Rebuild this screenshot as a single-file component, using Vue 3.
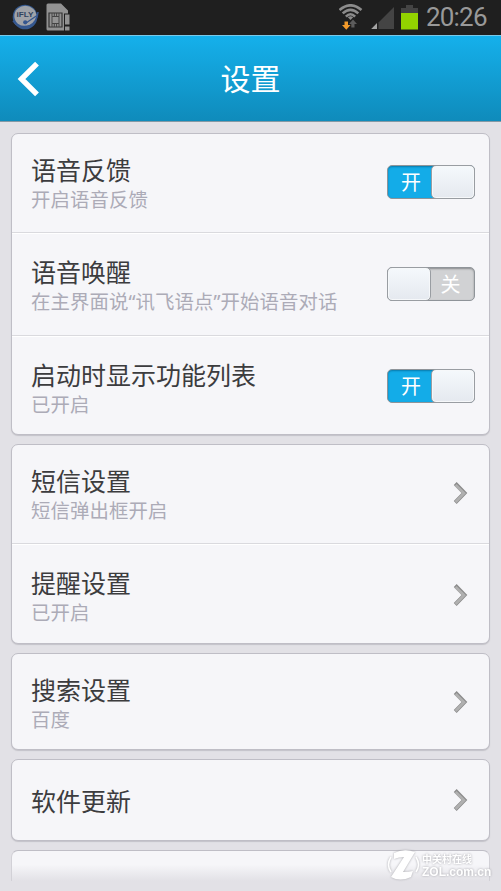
<script setup>
const groups = [
  [
    { title: '语音反馈', sub: '开启语音反馈', kind: 'switch', on: true, size: 'first' },
    { title: '语音唤醒', sub: '在主界面说“讯飞语点”开始语音对话', kind: 'switch', on: false, size: 'middle' },
    { title: '启动时显示功能列表', sub: '已开启', kind: 'switch', on: true, size: 'last' },
  ],
  [
    { title: '短信设置', sub: '短信弹出框开启', kind: 'link', size: 'first' },
    { title: '提醒设置', sub: '已开启', kind: 'link', size: 'last' },
  ],
  [{ title: '搜索设置', sub: '百度', kind: 'link', size: 'single' }],
  [{ title: '软件更新', kind: 'link', size: 'short' }],
]
</script>

<template>
  <div class="screen">
    <div class="status">
      <svg class="ifly" width="28" height="26" viewBox="0 0 28 26">
        <circle cx="13" cy="13" r="12.3" fill="#35598f" />
        <ellipse cx="13.3" cy="12.1" rx="11" ry="10.4" fill="#a0a3a8" />
        <path d="M2 19Q10 26 20 20Q24 17 26 9Q22 15 15 17Q19 18 18 20Q9 23 2 19Z" fill="#a0a3a8" />
        <path d="M1 17Q8 25 18 21.500Q25 18 26 8" fill="none" stroke="#34568f" stroke-width="1.600" />
        <path d="M14 19L25 11.500" stroke="#34568f" stroke-width="1.200" />
        <circle cx="13.2" cy="18.300" r="2.100" fill="#34568f" />
        <text x="4.600" y="13.400" font-size="7.600" font-weight="700" textLength="17" lengthAdjust="spacingAndGlyphs" fill="#30435f">iFLY</text>
      </svg>
      <svg class="sim" width="26" height="28" viewBox="0 0 26 28">
        <path d="M2 0.500H15L22 7.500V10.500H18V27.500H2Q0.500 27.500 0.500 26V2Q0.500 0.500 2 0.500Z" fill="#929292" />
        <path d="M3 10H16V24H3Z" fill="#929292" stroke="#333" stroke-width="1.200" />
        <path d="M6 13.500H13V20.500H6ZM6 10V13.500M8.300 10V13.500M10.600 10V13.500M13 10V13.500M6 20.500V24M8.300 20.500V24M10.600 20.500V24M13 20.500V24" fill="none" stroke="#444" stroke-width="1" />
        <path d="M19 11.500H23.500V21.500H19ZM19 23.500H23.500V27.500H19Z" fill="#929292" />
      </svg>
      <span class="grow"></span>
      <svg class="wifi" width="24" height="26" viewBox="0 0 24 26">
        <g fill="none" stroke="#8b8b8b" stroke-width="2.600">
          <path d="M0.500 6Q11.500-3.400 22.500 6" />
          <path d="M3.700 9.400Q11.500 2.200 19.300 9.400" />
          <path d="M6.900 12.600Q11.500 7.800 16.100 12.600" />
        </g>
        <path d="M8.800 13.300Q11.500 11 14.200 13.300L11.500 16Z" fill="#8b8b8b" />
        <path d="M5.500 17.500H9V21H11.500L7.300 25.800L3 21H5.500Z" fill="#f49b2b" />
        <path d="M12.300 23.500V20H10L14 15.500L18 20H15.500V23.500Z" fill="#5c5c5c" />
      </svg>
      <svg class="signal" width="24" height="24" viewBox="0 0 24 24">
        <path d="M23 1V23H7.500V16.500Z" fill="#444" />
        <path d="M6 17V23H0.200Z" fill="#a5a5a5" />
      </svg>
      <svg class="battery" width="17" height="25" viewBox="0 0 17 25">
        <path d="M5 0H12V3H17V9H0V3H5Z" fill="#444" />
        <path d="M0 8H17V24.500H0Z" fill="#93d300" />
      </svg>
      <span class="clock">20:26</span>
    </div>

    <header class="header">
      <svg class="back" width="24" height="38" viewBox="0 0 24 38">
        <path d="M20 3.700L4.500 19L20 34.300" fill="none" stroke="#fff" stroke-width="5.400" />
      </svg>
      <h1>设置</h1>
    </header>

    <main class="list">
      <section v-for="(group, i) in groups" :key="i" class="card">
        <div v-for="row in group" :key="row.title" class="row" :class="row.size">
          <div class="texts">
            <div class="title">{{ row.title }}</div>
            <div v-if="row.sub" class="sub">{{ row.sub }}</div>
          </div>
          <div v-if="row.kind === 'switch'" class="switch" :class="row.on ? 'on' : 'off'">
            <span class="label">{{ row.on ? '开' : '关' }}</span>
            <span class="knob"></span>
          </div>
          <svg v-else class="arrow" width="16" height="24" viewBox="0 0 16 24">
            <path d="M2.200 2.500L11.500 12L2.200 21.500" fill="none" stroke="#8b8b8b" stroke-width="4" />
            <path d="M2.600 4L11 12.300L2.600 21" fill="none" stroke="#b0b0b0" stroke-width="2.800" />
          </svg>
        </div>
      </section>
      <section class="card partial"></section>
    </main>

    <div class="watermark">
      <svg width="36" height="34" viewBox="0 0 36 34">
        <path d="M5 9Q0 17 5 24M30 9Q35 17 30 24" fill="none" stroke="#fff" stroke-width="1.500" />
        <path d="M8 5Q18 0 29 4L17 24Q22 24 27 23L25 29Q14 34 5 29L18 9Q13 9 8 11Z" fill="#fff" />
      </svg>
      <div class="mark">
        <div class="mark-cn">中关村在线</div>
        <div class="mark-en">ZOL.com.cn</div>
      </div>
    </div>
  </div>
</template>

<style>
body {
  margin: 0;
}
</style>

<style scoped>
.screen {
  position: relative;
  box-sizing: border-box;
  width: 501px;
  height: 891px;
  overflow: hidden;
  background: #e2e1e6;
  font-family: "Noto Sans", "Noto Sans CJK SC", sans-serif;
}
.ifly {
  font-family: "Liberation Sans", sans-serif;
}
.status {
  display: flex;
  box-sizing: border-box;
  height: 35px;
  padding: 4px 14px 0 12px;
  background: #1f1f1f;
}
.sim {
  margin: -1px 0 0 6px;
}
.grow {
  flex: 1;
}
.wifi {
  margin-right: 8px;
}
.signal {
  margin: 2px 6px 0 0;
}
.battery {
  margin: 1px 8px 0 0;
}
.clock {
  width: 61px;
  margin-top: -1px;
  font: 26px/28px Roboto, sans-serif;
  letter-spacing: -0.8px;
  color: #999;
  white-space: nowrap;
}
.header {
  display: grid;
  grid-template-columns: 60px 1fr 60px;
  align-items: center;
  box-sizing: border-box;
  height: 87px;
  border-top: 1px solid #79c9e9;
  border-bottom: 1px solid #8499a5;
  background: linear-gradient(#15b0eb, #0f8bbb);
}
.back {
  margin-left: 17px;
}
h1 {
  margin: 0;
  padding-bottom: 3px;
  font-family: "Noto Sans CJK SC", sans-serif;
  font-size: 30px;
  font-weight: 400;
  line-height: 40px;
  text-align: center;
  color: #fff;
}
.list {
  display: flex;
  flex-direction: column;
  gap: 9px;
  padding: 11px 11px 0;
}
.card {
  box-sizing: border-box;
  border: 1px solid #bfbec6;
  border-radius: 7px;
  background: #f6f6f9;
  box-shadow: 0 1px 1px #c4c3c9;
}
.row {
  display: flex;
  box-sizing: border-box;
  justify-content: space-between;
  align-items: center;
  padding: 0 14px 0 19px;
}
.row + .row {
  border-top: 1px solid #dadade;
  box-shadow: inset 0 1px #fff;
}
.first {
  height: 98px;
  padding-bottom: 2px;
}
.middle {
  height: 103px;
}
.last {
  height: 99px;
  padding-top: 3px;
}
.card + .card .last {
  height: 100px;
}
.single {
  height: 95px;
}
.short {
  height: 80px;
}
.texts {
  position: relative;
  top: 2px;
}
.short .texts {
  top: 0;
}
.title {
  font-family: "Noto Sans CJK SC", sans-serif;
  font-size: 25px;
  line-height: 30px;
  color: #3c3c3e;
}
.sub {
  margin-bottom: -2px;
  font-size: 19.4px;
  line-height: 32px;
  letter-spacing: 0.1px;
  color: #acabb7;
  white-space: nowrap;
}
.arrow {
  margin-right: 6px;
}
.switch {
  display: flex;
  box-sizing: border-box;
  width: 88px;
  height: 34px;
  border: 1px solid #8f9499;
  border-radius: 5px;
}
.last .switch {
  margin-top: -2px;
}
.switch.on {
  background: #13ace8;
  box-shadow: inset 0 1px 2px #0879aa;
}
.switch.off {
  flex-direction: row-reverse;
  background: #d1d2d4;
  box-shadow: inset 0 1px 2px #88898c;
}
.label {
  flex: 1;
  font-size: 20px;
  line-height: 34px;
  text-align: center;
  color: #fff;
}
.off .label {
  padding-right: 3px;
}
.on .label {
  padding-left: 2px;
}
.knob {
  box-sizing: border-box;
  width: 44px;
  height: 34px;
  margin: -1px;
  border: 1px solid #999da2;
  border-radius: 5px;
  background: linear-gradient(#f5f9fc, #e5e9ef);
  box-shadow: inset 0 0 0 1px #f6f8fa;
}
.partial {
  height: 31px;
  border-bottom: 0;
  border-radius: 7px 7px 0 0;
  box-shadow: none;
  border-color: #bfbec6 #d2d1d7;
  background: linear-gradient(#f6f6f9 45%, #e2e1e6);
}
.watermark {
  position: absolute;
  left: 386px;
  top: 848px;
  display: flex;
  filter: drop-shadow(0 0 1px #a5a5aa);
}
.mark {
  display: flex;
  flex-direction: column;
  gap: 1px;
  padding-top: 5px;
}
.mark-cn {
  font: 700 10px/12px "Noto Sans CJK SC", sans-serif;
  color: #fff;
}
.mark-en {
  font: 700 12px/12px "Liberation Sans", sans-serif;
  color: #fff;
}
</style>
